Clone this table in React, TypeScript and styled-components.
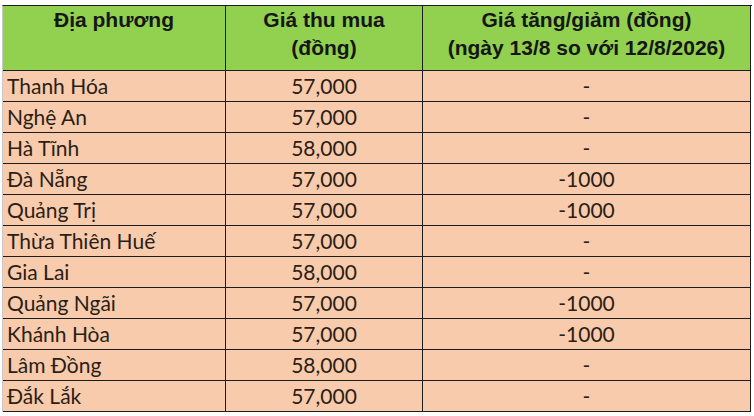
import { Fragment } from "react";
import styled, { createGlobalStyle } from "styled-components";

const Global = createGlobalStyle`
  html, body { margin: 0; padding: 0; background: #ffffff; }
  body { width: 754px; height: 416px; overflow: hidden; }
`;

const Page = styled.div`
  padding: 5px 0 0 2px;
`;

const Sheet = styled.div`
  display: grid;
  grid-template-columns: 223px 197px 328px;
  grid-template-rows: 65px;
  grid-auto-rows: 31px;
  width: 749px;
  border-top: 1px solid #1c1c1c;
  border-left: 1px solid #c9c9c9;
`;

const HeadCell = styled.div`
  background: #92d050;
  border-right: 1px solid #1c1c1c;
  border-bottom: 1px solid #1c1c1c;
  font-family: "Liberation Sans", Arial, sans-serif;
  font-weight: 700;
  font-size: 21px;
  line-height: 28px;
  color: #161616;
  text-align: center;
  padding-top: 0;
  box-sizing: border-box;
  white-space: nowrap;
`;

const Cell = styled.div<{ $align: "left" | "center" }>`
  background: #f8cbad;
  border-right: 1px solid #1c1c1c;
  border-bottom: 1px solid #1c1c1c;
  font-family: Lato, "Open Sans", sans-serif;
  font-size: 21px;
  line-height: 30px;
  color: #2a1e15;
  text-align: ${(p) => p.$align};
  padding-left: ${(p) => (p.$align === "left" ? "4px" : "0")};
  box-sizing: border-box;
  white-space: nowrap;
`;

const rows: [string, string, string][] = [
  ["Thanh Hóa", "57,000", "-"],
  ["Nghệ An", "57,000", "-"],
  ["Hà Tĩnh", "58,000", "-"],
  ["Đà Nẵng", "57,000", "-1000"],
  ["Quảng Trị", "57,000", "-1000"],
  ["Thừa Thiên Huế", "57,000", "-"],
  ["Gia Lai", "58,000", "-"],
  ["Quảng Ngãi", "57,000", "-1000"],
  ["Khánh Hòa", "57,000", "-1000"],
  ["Lâm Đồng", "58,000", "-"],
  ["Đắk Lắk", "57,000", "-"],
];

export default function App() {
  return (
    <Page>
      <Global />
      <Sheet>
        <HeadCell>Địa phương</HeadCell>
        <HeadCell>
          Giá thu mua
          <br />
          (đồng)
        </HeadCell>
        <HeadCell>
          Giá tăng/giảm (đồng)
          <br />
          (ngày 13/8 so với 12/8/2026)
        </HeadCell>
        {rows.map(([place, price, diff]) => (
          <Fragment key={place}>
            <Cell $align="left">{place}</Cell>
            <Cell $align="center">{price}</Cell>
            <Cell $align="center">{diff}</Cell>
          </Fragment>
        ))}
      </Sheet>
    </Page>
  );
}
